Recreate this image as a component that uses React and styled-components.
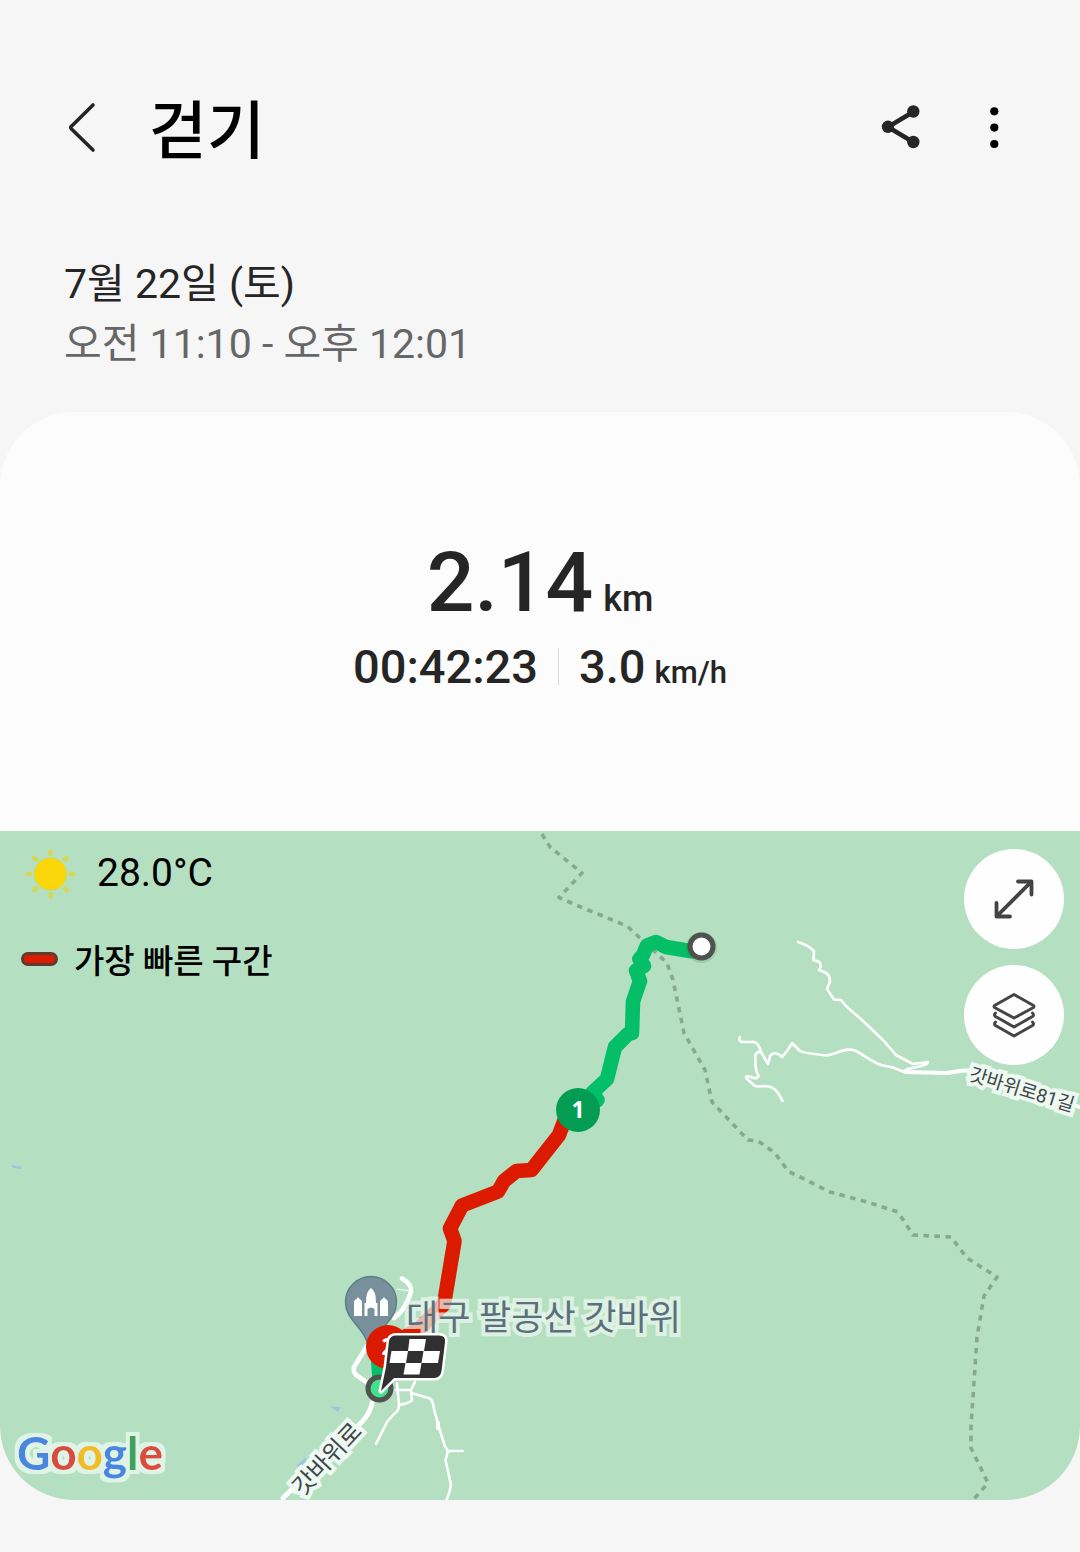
import styled, { createGlobalStyle } from "styled-components";

const GlobalStyle = createGlobalStyle`
  * {
    box-sizing: border-box;
  }
  body {
    margin: 0;
    background-color: #f6f6f6;
    color: #252525;
    font-family: Roboto, "Noto Sans CJK KR", sans-serif;
  }
  h1, p {
    margin: 0;
  }
`;

const Page = styled.div`
  min-height: 100vh;
  padding-bottom: 52px;
`;
const Header = styled.header`
  display: flex;
  align-items: center;
  padding: 84px 56px 0 52px;
`;
const Title = styled.h1`
  flex: 1;
  padding: 8px 0 0 37px;
  font-size: 63px;
  font-weight: 500;
  line-height: 80px;
  color: #000;
`;
const IconButton = styled.button`
  display: flex;
  align-items: center;
  justify-content: center;
  width: 60px;
  height: 60px;
  padding: 0;
  border: none;
  background: none;
  color: ${(props) => props.$color || "#252525"};
  cursor: pointer;
`;
const Actions = styled.div`
  display: flex;
  gap: 34px;
`;
const Period = styled.section`
  padding: 82px 64px 38px;
  font-size: 41px;
  line-height: 60px;
`;
const Time = styled.p`
  color: #666;
`;
const Card = styled.main`
  border-radius: 74px;
  overflow: hidden;
  background-color: #fcfcfc;
`;
const Summary = styled.section`
  display: flex;
  flex-direction: column;
  align-items: center;
  padding: 121px 24px 131px;
  font-weight: 500;
`;
const Distance = styled.p`
  display: flex;
  align-items: baseline;
  gap: 10px;
  font-size: 84px;
  line-height: 100px;
`;
const Unit = styled.span`
  font-size: ${(props) => props.$size}px;
  line-height: 1;
`;
const Details = styled.div`
  display: flex;
  align-items: center;
  font-size: 47px;
  line-height: 67px;
`;
const Divider = styled.span`
  width: 1px;
  height: 37px;
  margin: 0 20px;
  background-color: #dcdcdc;
`;
const Speed = styled.p`
  display: flex;
  align-items: baseline;
  gap: 9px;
`;
const Map = styled.section`
  position: relative;
  height: 669px;
  background-color: #b4e0c1;
`;
const MapCanvas = styled.svg`
  display: block;
  width: 100%;
  height: 100%;
`;
const MapInfo = styled.div`
  position: absolute;
  top: 12px;
  left: 21px;
  color: #000;
`;
const Weather = styled.div`
  display: flex;
  align-items: center;
  gap: 16px;
  height: 60px;
  font-size: 39px;
`;
const Legend = styled.div`
  display: flex;
  align-items: center;
  gap: 16px;
  height: 60px;
  margin-top: 26px;
  font-size: 33px;
  font-weight: 500;
`;
const LegendMark = styled.span`
  width: 37px;
  height: 14px;
  border: 3px solid #5b3c32;
  border-radius: 7px;
  background-color: #dc1a00;
`;
const MapTools = styled.div`
  position: absolute;
  top: 18px;
  right: 16px;
  display: flex;
  flex-direction: column;
  gap: 16px;
`;
const RoundButton = styled(IconButton)`
  width: 100px;
  height: 100px;
  border-radius: 50%;
  background-color: #fefefe;
  color: #444;
`;
const MapLabel = styled.text`
  font-size: ${(props) => props.$size}px;
  font-weight: ${(props) => props.$weight || 400};
  fill: ${(props) => props.$color || "#40464a"};
  stroke: ${(props) => props.$halo || "#eef9f1"};
  stroke-width: 8px;
  paint-order: stroke;
`;
const BadgeText = styled.text`
  font-family: "Noto Sans", sans-serif;
  font-size: 23px;
  font-weight: 700;
  fill: #fff;
  text-anchor: middle;
`;
const Logo = styled.text`
  font-family: Lato, sans-serif;
  font-size: 46px;
  font-weight: 700;
  filter: url(#logo-halo);
`;

const googleLetters = [
  ["G", "#4a86e0"],
  ["o", "#d84c3c"],
  ["o", "#f0bd22"],
  ["g", "#4a86e0"],
  ["l", "#40a35c"],
  ["e", "#dd4b3c"],
];

function BackIcon() {
  return (
    <svg width="60" height="60" fill="none" stroke="currentColor" strokeWidth="3.6" strokeLinecap="round" strokeLinejoin="round">
      <path d="M41 7 L19.5 28.2 Q18 29.5 19.5 31 L41 52" />
    </svg>
  );
}

function ShareIcon() {
  return (
    <svg width="60" height="60" fill="currentColor">
      <path d="M43 14 L18 29 L43 44" fill="none" stroke="currentColor" strokeWidth="4.6" />
      <circle cx="43.3" cy="13.5" r="6.2" />
      <circle cx="18" cy="28.8" r="6.2" />
      <circle cx="43.3" cy="44" r="6.2" />
    </svg>
  );
}

function MoreIcon() {
  return (
    <svg width="60" height="60" fill="currentColor">
      <circle cx="30.3" cy="13.3" r="4.1" />
      <circle cx="30.3" cy="29.6" r="4.1" />
      <circle cx="30.3" cy="46" r="4.1" />
    </svg>
  );
}

function SunIcon() {
  return (
    <svg width="60" height="60" viewBox="-29.5 -31 60 60" aria-hidden="true">
      <circle r="16.2" fill="#fad60a" stroke="#d9d84a" strokeWidth="1" />
      {[0, 45, 90, 135, 180, 225, 270, 315].map((angle) => (
        <ellipse key={angle} cy="-21.5" rx="2.4" ry="3.6" fill="#d8d648" opacity="0.85" transform={`rotate(${angle})`} />
      ))}
    </svg>
  );
}

function ExpandIcon() {
  return (
    <svg width="44" height="44" fill="none" stroke="currentColor" strokeWidth="3.8" strokeLinecap="round" strokeLinejoin="round">
      <path d="M5 39 L39 5 M26 4.5 H39.5 V17.5 M4.5 26 V39.5 H18" />
    </svg>
  );
}

function LayersIcon() {
  return (
    <svg width="46" height="46" fill="none" stroke="currentColor" strokeWidth="3" strokeLinecap="round" strokeLinejoin="round">
      <path d="M23 2.5 L42.5 13.5 Q43.5 14.5 42.5 15.5 L23 26 L3.5 15.5 Q2.5 14.5 3.5 13.5 Z" />
      <path d="M4.5 21 Q2.5 23 4.5 24.5 L23 35 L41.5 24.5 Q43.5 23 41.5 21" />
      <path d="M4.5 30 Q2.5 32 4.5 33.5 L23 44 L41.5 33.5 Q43.5 32 41.5 30" />
    </svg>
  );
}

function Roads() {
  return (
    <g fill="none" stroke="#fff" strokeLinecap="round" strokeLinejoin="round">
      <g strokeWidth="2.6">
        <path d="M798 942 Q808 945 814 951 L813.500 960 L819.500 962 Q822 966 819 970 L826.500 973 Q832 979 829 984 L827 989 L834 999.500 L841 1000 L847 1007 L862 1020 L883 1040 L896 1055 L913 1064 L928 1062 Q929 1065 907 1069 L903 1071.500" />
        <path d="M740 1037 Q738 1042 743 1042 H752 Q758 1041 761 1052 L768 1064 L770 1056 Q775 1050 782 1057 Q788 1051 792 1043 L800 1051 Q803 1053 827 1055.500 C836 1054 846 1047 855 1050.500 C866 1056 874 1064 883 1065.500 L893 1067.500 L903 1071.500" />
        <path d="M761 1052 Q754 1051 755.500 1060 Q755 1070 758.500 1076 Q757 1080 751 1077 Q744 1075 747 1079 L755 1086 C764 1088 773 1080 782.500 1101" />
        <path d="M397 1383 L399 1405 Q399 1411 394 1414 L387 1422 L376 1444" />
        <path d="M396 1390 H411 L415 1382 M411 1390 L412 1400 Q410 1403 399 1405" />
        <path d="M411 1393 L430 1398.500 Q433 1401 434 1409 L438.500 1426 L443 1440 Q444 1446 448 1451 H462.500 M448 1451 L445.500 1460 L451 1485 Q450 1492 446.500 1500" />
        <path d="M438 1423 V1428" strokeWidth="4" />
      </g>
      <path d="M397 1289 L411 1291" strokeWidth="1.200" />
      <g strokeWidth="4.6">
        <path d="M402 1278.500 Q412 1284 411 1292 Q404 1312 394 1318" />
        <path d="M367 1346 L354 1367 Q353 1372 356 1375 L368 1383" />
        <path d="M372 1403 Q370 1417 350 1433 L283 1498" strokeWidth="5" />
        <path d="M905 1072 L947 1073 L960 1071 Q972 1069 985 1076 L1080 1107" strokeWidth="4" />
      </g>
    </g>
  );
}

function Trail() {
  return (
    <path
      d="M542 834 L550 847 L582 873 L559 897.500 L583 908 L627 926 L640 938 L667 963 L673 980 L684 1033 L705 1070 L712 1102 L748 1140 L758 1141 L775 1153 L788 1171 L830 1192 L867 1202 L898 1212 L913 1235 L951 1237 L967 1258 L997 1277 L984 1296 L977 1337 L971 1427 V1448 L988 1483 L973 1500"
      fill="none"
      stroke="#86a892"
      strokeWidth="3.6"
      strokeDasharray="5.500 5.500"
      strokeLinejoin="round"
    />
  );
}

function PlacePin() {
  return (
    <g>
      <path
        d="M345.500 1302 A25.500 25.500 0 0 1 396.500 1302 C396.500 1322 376 1326 372 1352 H370 C366 1326 345.500 1322 345.500 1302 Z"
        fill="#788f9c"
        stroke="#5e7f87"
        strokeWidth="1.500"
      />
      <g fill="#fff">
        <path d="M354 1316 V1301.500 Q354.500 1299.500 356.500 1299 L358 1297 L359.500 1299 Q361.500 1299.500 362 1301.500 V1316 Z" />
        <path d="M380 1316 V1301.500 Q380.500 1299.500 382.500 1299 L384 1297 L385.500 1299 Q387.500 1299.500 388 1301.500 V1316 Z" />
        <path d="M364.500 1316 V1303 H366 Q366 1293 369 1290 L371 1288 L373 1290 Q376 1293 376 1303 H377.500 V1316 H374.500 V1309 Q371 1306 367.500 1309 V1316 Z" />
      </g>
    </g>
  );
}

function FinishFlag() {
  return (
    <g>
      <path
        d="M396 1335.500 H439 Q446 1335.500 445 1342 L441.500 1371 Q440.500 1378 434 1378 H394 Q391 1381 381 1391 L386 1367 L389 1341 Q390 1335.500 396 1335.500 Z"
        fill="#303030"
        stroke="#fff"
        strokeWidth="5"
        strokeLinejoin="round"
        paintOrder="stroke"
      />
      <g fill="#fff">
        <path d="M409.500 1339 H426 L424 1351 H408 Z" />
        <path d="M391.500 1351 H408 L406 1363 H389.500 Z" />
        <path d="M423.500 1351 H440 L438 1363 H421.500 Z" />
        <path d="M405.500 1363 H421.500 L419.500 1374.500 H403.500 Z" />
      </g>
    </g>
  );
}

function RouteMap() {
  return (
    <MapCanvas viewBox="0 831 1080 669" preserveAspectRatio="xMidYMid slice" role="img" aria-label="걷기 경로">
      <defs>
        <filter id="logo-halo" x="-10%" y="-20%" width="120%" height="140%">
          <feMorphology in="SourceAlpha" operator="dilate" radius="4" result="spread" />
          <feFlood floodColor="#dff3e6" />
          <feComposite in2="spread" operator="in" result="halo" />
          <feMerge>
            <feMergeNode in="halo" />
            <feMergeNode in="SourceGraphic" />
          </feMerge>
        </filter>
      </defs>
      <g fill="#9cc4e6">
        <path d="M11 1165 L21 1166.500 V1169 L13 1168 Z" />
        <path d="M330.500 1406.500 L341 1407 L338 1412 Z" />
        <path d="M296 1466 L306 1457 V1466 Z" />
      </g>
      <Trail />
      <Roads />
      <PlacePin />
      <g fill="none" strokeWidth="14.600" strokeLinecap="round" strokeLinejoin="round">
        <path
          d="M701 952 L690 951 L666 947 L656 942 L647 945.500 L643 955 L639.500 959 L644 966 L636 970.500 L640 981 L633 1001.500 L632 1033 L628 1034 L615 1047 L607 1079 L592 1093 L597.500 1100 L578 1110"
          stroke="#04bf68"
        />
        <path d="M378 1358 L380 1384" stroke="#04bf68" />
        <path
          d="M565 1119 L559 1135 L531.500 1170 L516.500 1171 L504 1181 L498 1191.500 L462 1205.500 L450 1228.500 L454.500 1241 L444 1304 L420 1328 L408 1335 L388 1347"
          stroke="#dc1a00"
        />
      </g>
      <MapLabel x="406" y="1330" $size={35} $color="#5a707c" $halo="rgba(236, 248, 240, 0.72)">
        대구 팔공산 갓바위
      </MapLabel>
      <MapLabel $size={19} transform="translate(968 1080) rotate(17)">
        갓바위로81길
      </MapLabel>
      <MapLabel $size={24} transform="translate(303 1497) rotate(-47)">
        갓바위로
      </MapLabel>
      <circle cx="578" cy="1110" r="22" fill="#029d52" />
      <BadgeText x="578" y="1118">1</BadgeText>
      <circle cx="388" cy="1347" r="22" fill="#dc1a00" />
      <BadgeText x="388" y="1355">2</BadgeText>
      <g stroke="#505250" strokeWidth="5">
        <circle cx="701.500" cy="947.500" r="13" fill="none" stroke="#3c5a46" strokeOpacity="0.16" />
        <circle cx="701.500" cy="946.500" r="11.500" fill="#fff" />
        <circle cx="379.500" cy="1388.500" r="11.500" fill="#45e08e" />
      </g>
      <FinishFlag />
      <Logo x="17" y="1470">
        {googleLetters.map(([letter, color], index) => (
          <tspan key={index} fill={color}>
            {letter}
          </tspan>
        ))}
      </Logo>
    </MapCanvas>
  );
}

function App() {
  return (
    <Page>
      <GlobalStyle />
      <Header>
        <IconButton aria-label="뒤로">
          <BackIcon />
        </IconButton>
        <Title>걷기</Title>
        <Actions>
          <IconButton aria-label="공유">
            <ShareIcon />
          </IconButton>
          <IconButton aria-label="더보기" $color="#000">
            <MoreIcon />
          </IconButton>
        </Actions>
      </Header>
      <Period>
        <p>7월 22일 (토)</p>
        <Time>오전 11:10 - 오후 12:01</Time>
      </Period>
      <Card>
        <Summary>
          <Distance>
            2.14<Unit $size={36}>km</Unit>
          </Distance>
          <Details>
            <p>00:42:23</p>
            <Divider />
            <Speed>
              3.0<Unit $size={31}>km/h</Unit>
            </Speed>
          </Details>
        </Summary>
        <Map>
          <RouteMap />
          <MapInfo>
            <Weather>
              <SunIcon />
              28.0°C
            </Weather>
            <Legend>
              <LegendMark />
              가장 빠른 구간
            </Legend>
          </MapInfo>
          <MapTools>
            <RoundButton aria-label="지도 확대">
              <ExpandIcon />
            </RoundButton>
            <RoundButton aria-label="지도 유형">
              <LayersIcon />
            </RoundButton>
          </MapTools>
        </Map>
      </Card>
    </Page>
  );
}

export default App;
